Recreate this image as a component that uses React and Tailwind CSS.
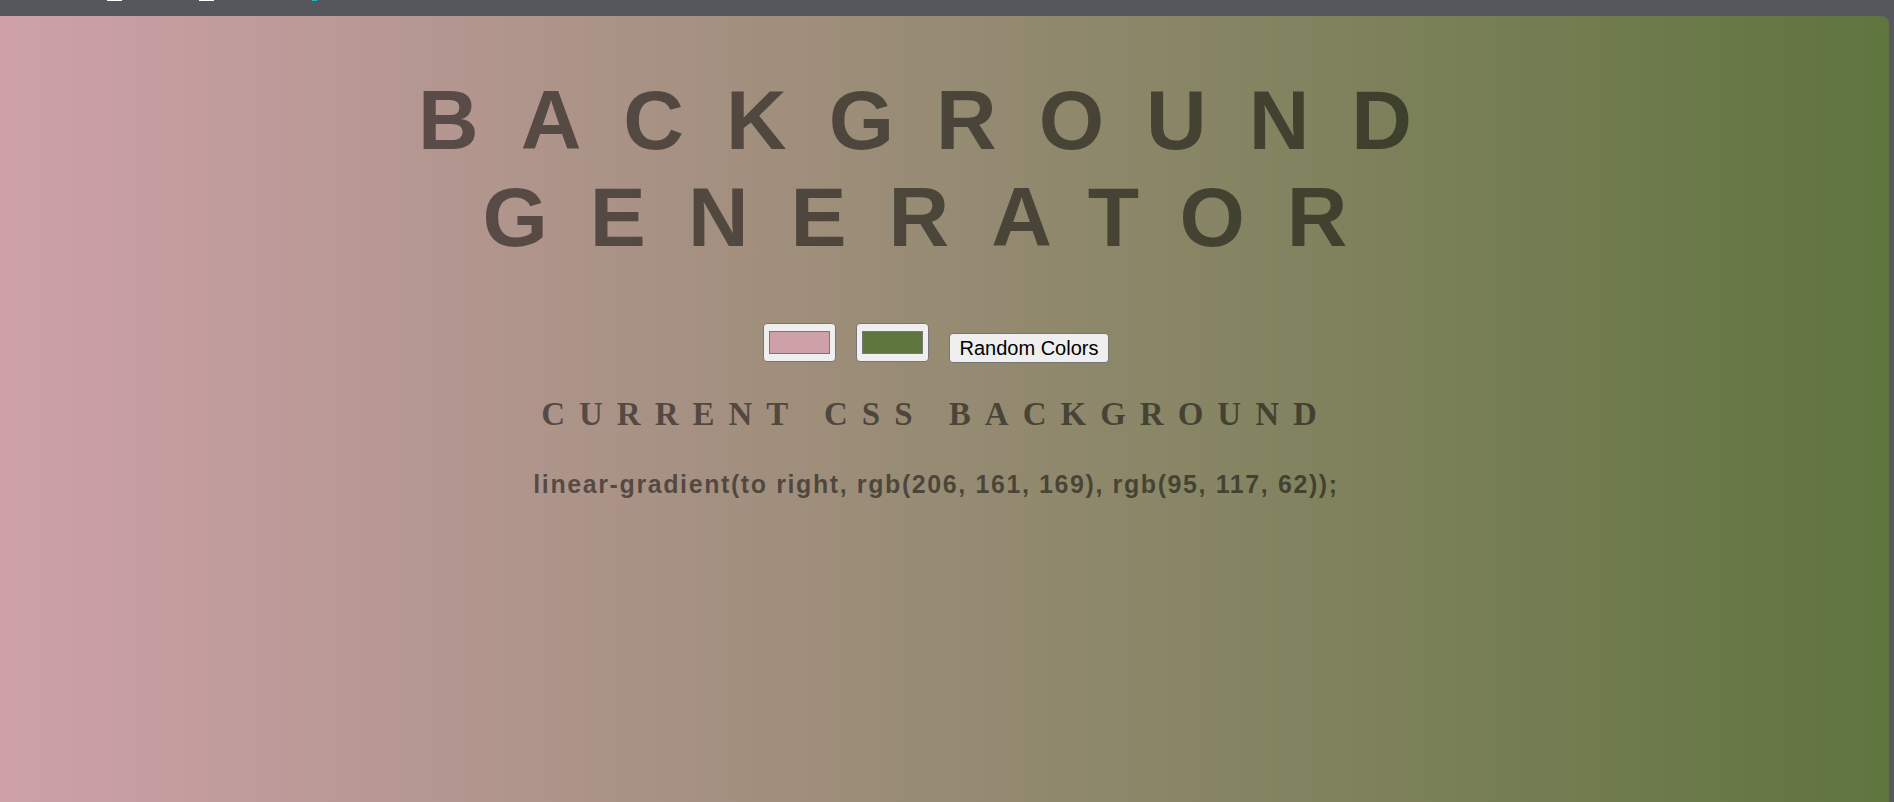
import React from 'react';

const FROM = 'rgb(206, 161, 169)';
const TO = 'rgb(95, 117, 62)';

function ColorSwatch({ color }) {
  return (
    <div className="w-[73px] h-[39px] bg-[#efefef] border border-[#767676] rounded-[4px] flex items-center justify-center">
      <div className="w-[61px] h-[23px] border border-[#777777]" style={{ backgroundColor: color }} />
    </div>
  );
}

export default function App() {
  return (
    <div className="w-[1894px] h-[802px] bg-[#56575c] flex flex-col overflow-hidden font-['Liberation_Sans',Arial,sans-serif]">
      {/* browser chrome strip */}
      <div className="h-[16px] flex items-start shrink-0">
        <span className="ml-[107px] w-[15px] h-px bg-white" />
        <span className="ml-[77px] w-[15px] h-px bg-white" />
        <span className="ml-[98px] w-[5px] h-px bg-[#1fb8c4]" />
      </div>

      <div className="flex flex-1">
        <main className="w-[1889px] rounded-tr-[8px] bg-[linear-gradient(to_right,rgb(206,161,169),rgb(95,117,62))] flex flex-col items-center pr-[17px] text-black/50">
          <h1 className="mt-[56px] text-[84px] leading-[97px] font-bold tracking-[0.5em] text-center">
            BACKGROUND
            <br />
            GENERATOR
          </h1>

          <div className="mt-[57px] flex items-start gap-[20px]">
            <ColorSwatch color={FROM} />
            <ColorSwatch color={TO} />
            <button className="mt-[10px] h-[30px] px-[10px] bg-[#efefef] border border-[#767676] rounded-[4px] text-[20px] leading-none text-black">
              Random Colors
            </button>
          </div>

          <h3 className="mt-[32px] font-['Liberation_Serif','Times_New_Roman',serif] font-bold text-[33px] leading-[38px] tracking-[14px]">
            CURRENT CSS BACKGROUND
          </h3>

          <p className="mt-[37px] text-[25px] leading-[29px] font-bold tracking-[1.6px]">
            linear-gradient(to right, {FROM}, {TO});
          </p>
        </main>
        <div className="flex-1" />
      </div>
    </div>
  );
}
